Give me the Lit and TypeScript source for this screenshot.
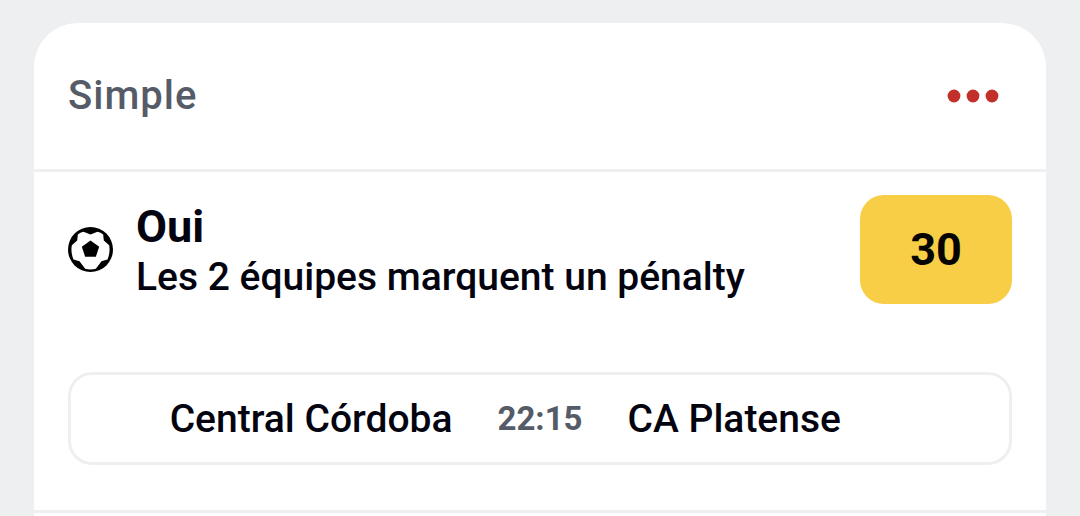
import { LitElement, html, css } from "lit";
import { customElement } from "lit/decorators.js";

@customElement("app-root")
export class AppRoot extends LitElement {
  static styles = css`
    :host {
      display: block;
      box-sizing: border-box;
      min-height: 100vh;
      padding: 23px 34px 0;
      background: #eeeff1;
      color: #03040f;
      font-family: Roboto, "Liberation Sans", sans-serif;
      font-weight: 500;
    }
    * { box-sizing: border-box; }
    .card {
      background: #fff;
      border-radius: 44px 44px 0 0;
      min-height: calc(100vh - 23px);
    }
    .head {
      display: flex;
      align-items: center;
      justify-content: space-between;
      height: 149px;
      padding: 0 34px;
      border-bottom: 3px solid #eeeff0;
    }
    .kind {
      margin: 0;
      font-size: 40px;
      line-height: 48px;
      font-weight: 500;
      letter-spacing: 1px;
      color: #565c67;
    }
    button {
      font: inherit;
      color: inherit;
      border: 0;
      margin: 0;
      cursor: pointer;
    }
    .more {
      display: flex;
      padding: 12px;
      background: none;
    }
    .bet {
      display: flex;
      align-items: center;
      gap: 23px;
      padding: 23px 34px 0;
    }
    .ball { flex: none; width: 45px; height: 45px; }
    .pick { flex: 1; min-width: 0; padding-top: 2px; }
    .choice {
      margin: 0;
      font-size: 45px;
      line-height: 52px;
      font-weight: 700;
    }
    .market {
      margin: 0;
      font-size: 39px;
      line-height: 48px;
    }
    .odds {
      flex: none;
      width: 152px;
      height: 109px;
      border-radius: 24px;
      background: #f7ce46;
      color: #050402;
      font-size: 45px;
      font-weight: 700;
    }
    .match {
      display: grid;
      grid-template-columns: 1fr auto 1fr;
      align-items: center;
      gap: 45px;
      height: 93px;
      margin: 68px 34px 45px;
      border: 3px solid #eeeff0;
      border-radius: 24px;
      font-size: 39px;
      line-height: 48px;
    }
    .home { text-align: right; }
    .time { font-size: 33px; font-weight: 700; color: #565c67; }
    .foot { border-top: 3px solid #eeeff0; }
  `;

  render() {
    return html`
      <article class="card">
        <header class="head">
          <h1 class="kind">Simple</h1>
          <button class="more" aria-label="Options">
            <svg width="54" height="14" viewBox="0 0 54 14" fill="#c1302b">
              <circle cx="8" cy="7" r="6.4" />
              <circle cx="27" cy="7" r="6.4" />
              <circle cx="46" cy="7" r="6.4" />
            </svg>
          </button>
        </header>
        <section class="bet">
          <svg class="ball" viewBox="-67.5 -67.5 135 135" aria-hidden="true">
            <circle r="67.5" />
            <path
              fill="#fff"
              d="M0-45 21-53Q31-51 38-45L40-27 56-13Q60 8 51 30L33 35 16 58Q0 62-16 58L-33 35-51 30Q-60 8-56-13L-40-27-38-45Q-31-51-21-53Z"
            />
            <path d="M0-27 26-8 16 22H-16L-26-8Z" />
          </svg>
          <div class="pick">
            <h2 class="choice">Oui</h2>
            <p class="market">Les 2 équipes marquent un pénalty</p>
          </div>
          <button class="odds">30</button>
        </section>
        <div class="match">
          <span class="home">Central Córdoba</span>
          <time class="time" datetime="22:15">22:15</time>
          <span>CA Platense</span>
        </div>
        <div class="foot"></div>
      </article>
    `;
  }
}
